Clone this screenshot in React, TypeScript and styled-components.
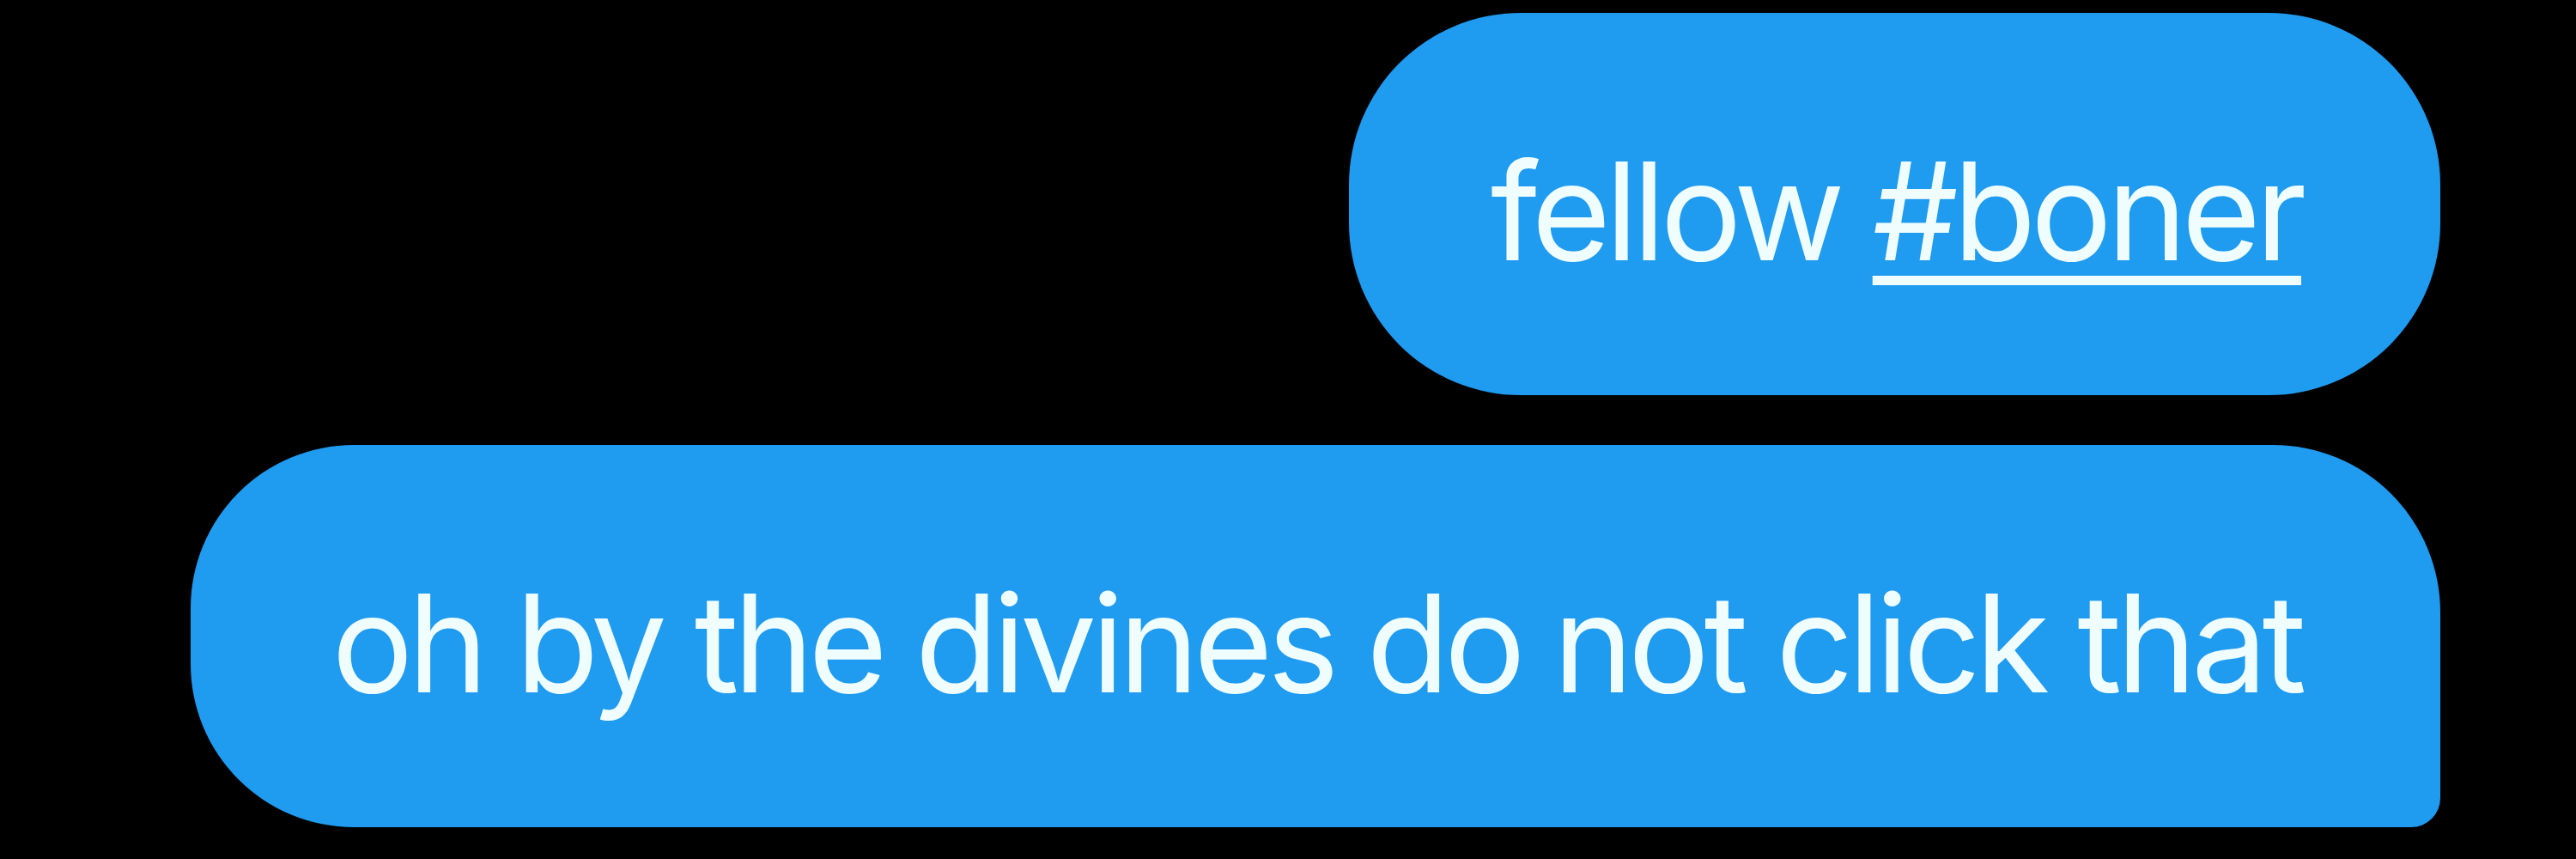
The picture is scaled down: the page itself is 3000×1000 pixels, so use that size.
import React from "react";
import styled, { createGlobalStyle } from "styled-components";

const Global = createGlobalStyle`
  html, body {
    margin: 0;
    padding: 0;
    background: #000;
  }
  body {
    width: 3000px;
    height: 1000px;
    overflow: hidden;
  }
`;

const Thread = styled.main`
  width: 3000px;
  height: 1000px;
  box-sizing: border-box;
  background: #000;
  display: flex;
  flex-direction: column;
  align-items: flex-end;
  gap: 58px;
  padding: 15px 158px 0 0;
  font-family: Inter, "Noto Sans", sans-serif;
`;

const Bubble = styled.div<{ $tail?: boolean }>`
  box-sizing: border-box;
  height: 445px;
  display: flex;
  align-items: center;
  padding: 17px 162px 0 165px;
  background: #1f9bf0;
  color: #effdff;
  border-radius: ${(p) => (p.$tail ? "190px 195px 34px 190px" : "200px")};
  font-size: 158px;
  line-height: 150px;
  letter-spacing: -6.2px;
  white-space: nowrap;
`;

const Hashtag = styled.span`
  text-decoration: underline;
  text-decoration-thickness: 11px;
  text-underline-offset: 18px;
`;

export default function App() {
  return (
    <>
      <Global />
      <Thread>
        <Bubble>
          <span>
            fellow <Hashtag>#boner</Hashtag>
          </span>
        </Bubble>
        <Bubble $tail>
          <span>oh by the divines do not click that</span>
        </Bubble>
      </Thread>
    </>
  );
}
